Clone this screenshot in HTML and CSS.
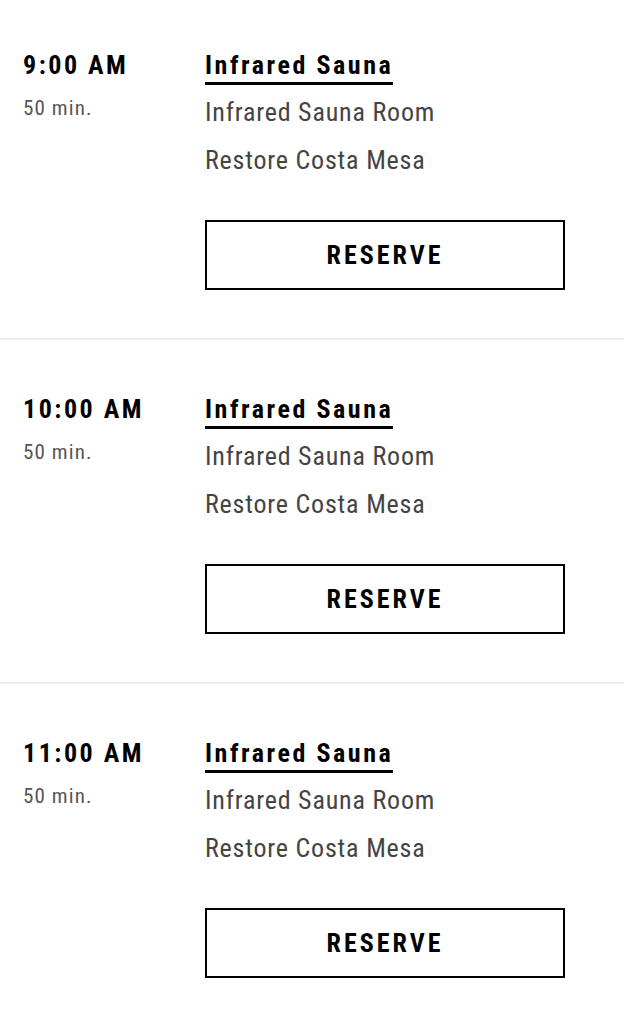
FILE: index.html
```html
<!DOCTYPE html>
<html>
<head>
<meta charset="utf-8">
<link rel="stylesheet" href="styles.css">
</head>
<body>
<div class="list">
  <div class="row">
    <div class="when">
      <div class="time">9:00 AM</div>
      <div class="dur">50 min.</div>
    </div>
    <div class="info">
      <div class="title">Infrared Sauna</div>
      <div class="subs">
        <div class="sub">Infrared Sauna Room</div>
        <div class="sub">Restore Costa Mesa</div>
      </div>
      <button class="reserve">RESERVE</button>
    </div>
  </div>
  <div class="row">
    <div class="when">
      <div class="time">10:00 AM</div>
      <div class="dur">50 min.</div>
    </div>
    <div class="info">
      <div class="title">Infrared Sauna</div>
      <div class="subs">
        <div class="sub">Infrared Sauna Room</div>
        <div class="sub">Restore Costa Mesa</div>
      </div>
      <button class="reserve">RESERVE</button>
    </div>
  </div>
  <div class="row">
    <div class="when">
      <div class="time">11:00 AM</div>
      <div class="dur">50 min.</div>
    </div>
    <div class="info">
      <div class="title">Infrared Sauna</div>
      <div class="subs">
        <div class="sub">Infrared Sauna Room</div>
        <div class="sub">Restore Costa Mesa</div>
      </div>
      <button class="reserve">RESERVE</button>
    </div>
  </div>
</div>
</body>
</html>
```
FILE: styles.css
```css
html, body {
  margin: 0;
  padding: 0;
  background: #fff;
}
body {
  font-family: "Roboto Condensed", Roboto, "Liberation Sans", sans-serif;
  color: #000;
}
.row {
  display: grid;
  grid-template-columns: 182px 360px;
  padding: 54px 0 48px 23px;
  border-bottom: 2px solid #ebebeb;
}
.row:first-child {
  padding-top: 50px;
}
.time {
  font-size: 26px;
  font-weight: 700;
  letter-spacing: 2.5px;
  line-height: 30px;
}
.dur {
  font-size: 21px;
  color: #555;
  letter-spacing: 1.1px;
  line-height: 26px;
  margin-top: 15px;
}
.info {
  display: flex;
  flex-direction: column;
  align-items: flex-start;
}
.title {
  font-size: 26px;
  font-weight: 700;
  letter-spacing: 2.55px;
  line-height: 30px;
  padding-bottom: 2px;
  border-bottom: 3px solid #000;
}
.subs {
  margin-top: 3px;
  margin-bottom: 1px;
}
.sub {
  font-size: 26px;
  color: #444;
  letter-spacing: 0.8px;
  line-height: 48px;
}
.reserve {
  margin-top: 35px;
  width: 360px;
  height: 70px;
  border: 2px solid #000;
  background: #fff;
  font-family: inherit;
  font-size: 26px;
  font-weight: 700;
  letter-spacing: 3px;
  color: #000;
  padding: 0;
}
```
